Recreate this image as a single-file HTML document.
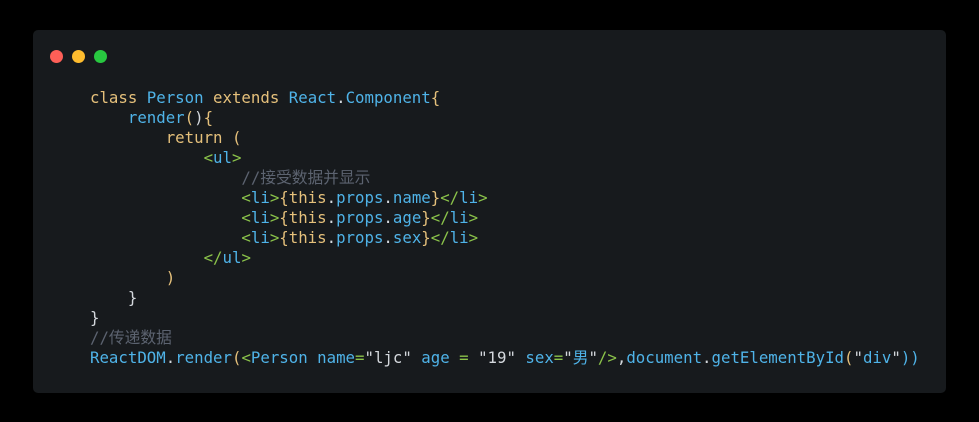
<!DOCTYPE html>
<html><head><meta charset="utf-8"><style>
body{margin:0;width:979px;height:422px;background:#000;overflow:hidden}
.card{position:absolute;left:33px;top:30px;width:913px;height:363px;background:#171a1d;border-radius:5px}
.d{position:absolute;top:20px;width:13px;height:13px;border-radius:50%}
pre{position:absolute;left:57px;top:58px;margin:0;font-family:"DejaVu Sans Mono","Noto Sans CJK SC",monospace;font-size:15.72px;line-height:20px;color:#c8cdd3}
.k{color:#e5c07b}.b{color:#4fb3e8}.g{color:#8bc34a}.c{color:#5c6370}.y{color:#e5c07b}.w{color:#d4d8dd}
</style></head><body><div class="card">
<div class="d" style="left:17px;background:#fe5f57"></div>
<div class="d" style="left:39px;background:#febc2e"></div>
<div class="d" style="left:61px;background:#28c840"></div>
<pre><span class="k">class</span> <span class="b">Person</span> <span class="k">extends</span> <span class="b">React</span><span class="w">.</span><span class="b">Component</span><span class="y">{</span>
    <span class="b">render</span><span class="y">(</span><span class="w">)</span><span class="y">{</span>
        <span class="k">return</span> <span class="y">(</span>
            <span class="g">&lt;</span><span class="b">ul</span><span class="g">&gt;</span>
                <span class="c">//接受数据并显示</span>
                <span class="g">&lt;</span><span class="b">li</span><span class="g">&gt;</span><span class="y">{this</span><span class="w">.</span><span class="b">props</span><span class="w">.</span><span class="b">name</span><span class="y">}</span><span class="g">&lt;/</span><span class="b">li</span><span class="g">&gt;</span>
                <span class="g">&lt;</span><span class="b">li</span><span class="g">&gt;</span><span class="y">{this</span><span class="w">.</span><span class="b">props</span><span class="w">.</span><span class="b">age</span><span class="y">}</span><span class="g">&lt;/</span><span class="b">li</span><span class="g">&gt;</span>
                <span class="g">&lt;</span><span class="b">li</span><span class="g">&gt;</span><span class="y">{this</span><span class="w">.</span><span class="b">props</span><span class="w">.</span><span class="b">sex</span><span class="y">}</span><span class="g">&lt;/</span><span class="b">li</span><span class="g">&gt;</span>
            <span class="g">&lt;/</span><span class="b">ul</span><span class="g">&gt;</span>
        <span class="y">)</span>
    <span class="w">}</span>
<span class="w">}</span>
<span class="c">//传递数据</span>
<span class="b">ReactDOM</span><span class="w">.</span><span class="b">render</span><span class="y">(</span><span class="g">&lt;</span><span class="b">Person</span> <span class="b">name</span><span class="g">=</span><span class="w">"ljc"</span> <span class="b">age</span> <span class="g">=</span> <span class="w">"19"</span> <span class="b">sex</span><span class="g">=</span><span class="w">"</span><span class="b">男</span><span class="w">"</span><span class="g">/&gt;</span><span class="w">,</span><span class="b">document</span><span class="w">.</span><span class="b">getElementById</span><span class="y">(</span><span class="w">"</span><span class="b">div</span><span class="w">"</span><span class="b">))</span></pre>
</div></body></html>
